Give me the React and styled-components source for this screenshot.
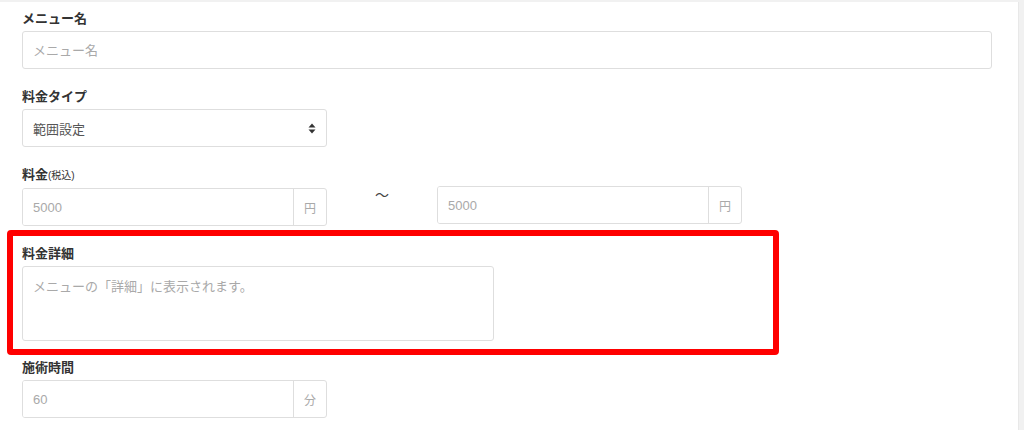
import React from 'react'
import styled, { createGlobalStyle } from 'styled-components'

const GlobalStyle = createGlobalStyle`
  html, body {
    margin: 0;
    padding: 0;
    background: #f1f1f1;
  }
  body {
    font-family: "Liberation Sans", "Noto Sans CJK JP", sans-serif;
    color: #333;
  }
`

const Page = styled.div`
  box-sizing: border-box;
  padding-top: 2px;
  padding-right: 5px;
  height: 430px;
  overflow: hidden;
`

const Panel = styled.form`
  box-sizing: border-box;
  background: #fff;
  border-right: 1px solid #e8e8e8;
  height: 100%;
  padding: 8px 26px 0 22px;
`

const Field = styled.div`
  margin-bottom: 19px;
`

const Label = styled.label`
  display: block;
  font-size: 13px;
  line-height: 18px;
  font-weight: bold;
  color: #333;
  margin-bottom: 3px;
`

const Small = styled.span`
  font-size: 10px;
  font-weight: normal;
`

const TextInput = styled.input`
  box-sizing: border-box;
  display: block;
  width: ${p => p.$width || '100%'};
  height: 38px;
  padding: 0 10px;
  border: 1px solid #dedede;
  border-radius: 3px;
  font-family: inherit;
  font-size: 13px;
  color: #555;
  outline: none;
  background: #fff;
  &::placeholder {
    color: #a9a9a9;
  }
`

const SelectBox = styled.div`
  box-sizing: border-box;
  display: flex;
  align-items: center;
  justify-content: space-between;
  width: 305px;
  height: 38px;
  padding: 0 10px;
  border: 1px solid #dedede;
  border-radius: 3px;
  font-size: 13px;
  color: #555;
`

const PriceRow = styled.div`
  display: grid;
  grid-template-columns: 305px 110px 305px;
  align-items: start;
`

const Tilde = styled.div`
  text-align: center;
  font-size: 14px;
  line-height: 14px;
  color: #444;
`

const Group = styled.div`
  box-sizing: border-box;
  display: flex;
  width: 305px;
  height: 38px;
  margin-top: ${p => p.$shift || 0}px;
  border: 1px solid #dedede;
  border-radius: 3px;
  overflow: hidden;
`

const GroupInput = styled.input`
  flex: 1;
  min-width: 0;
  border: none;
  padding: 0 10px;
  font-family: inherit;
  font-size: 13px;
  color: #555;
  outline: none;
  &::placeholder {
    color: #a9a9a9;
  }
`

const Addon = styled.span`
  display: flex;
  align-items: center;
  justify-content: center;
  width: 32px;
  border-left: 1px solid #dedede;
  font-size: 12px;
  color: #a9a9a9;
`

const Highlight = styled.div`
  box-sizing: border-box;
  width: 772px;
  margin: -15px 0 4px -15px;
  padding: 9px 9px 8px;
  border: 6px solid #ff0000;
  border-radius: 4px;
`

const TextArea = styled.textarea`
  box-sizing: border-box;
  display: block;
  width: 472px;
  height: 75px;
  padding: 9px 10px;
  border: 1px solid #dedede;
  border-radius: 3px;
  font-family: inherit;
  font-size: 13px;
  resize: none;
  outline: none;
  &::placeholder {
    color: #a9a9a9;
  }
`

const SortIcon = () => (
  <svg width="8" height="11" viewBox="0 0 8 11">
    <path d="M4 0.5 L7.5 4.5 H0.5 Z" fill="#333" />
    <path d="M4 10.5 L7.5 6.5 H0.5 Z" fill="#333" />
  </svg>
)

export default function App() {
  return (
    <Page>
      <GlobalStyle />
      <Panel onSubmit={e => e.preventDefault()}>
        <Field>
          <Label>メニュー名</Label>
          <TextInput placeholder="メニュー名" />
        </Field>

        <Field>
          <Label>料金タイプ</Label>
          <SelectBox>
            <span>範囲設定</span>
            <SortIcon />
          </SelectBox>
        </Field>

        <Field>
          <Label>
            料金<Small>(税込)</Small>
          </Label>
          <PriceRow>
            <Group>
              <GroupInput placeholder="5000" />
              <Addon>円</Addon>
            </Group>
            <Tilde>〜</Tilde>
            <Group $shift={-2}>
              <GroupInput placeholder="5000" />
              <Addon>円</Addon>
            </Group>
          </PriceRow>
        </Field>

        <Highlight>
          <Label>料金詳細</Label>
          <TextArea placeholder="メニューの「詳細」に表示されます。" />
        </Highlight>

        <Field>
          <Label>施術時間</Label>
          <Group>
            <GroupInput placeholder="60" />
            <Addon>分</Addon>
          </Group>
        </Field>
      </Panel>
    </Page>
  )
}
